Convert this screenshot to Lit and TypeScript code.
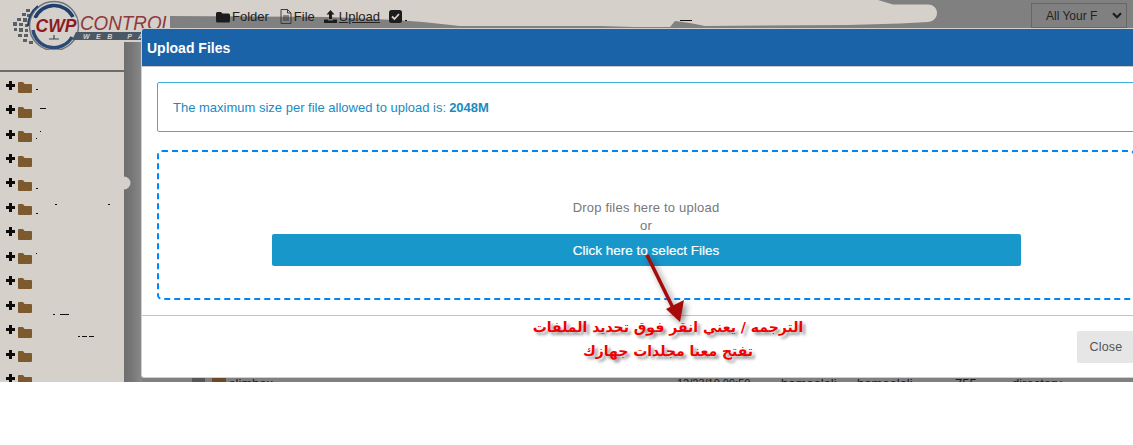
import { LitElement, html, css, svg } from "lit";
import { customElement } from "lit/decorators.js";

const ROWS = 13;

const background = svg`
<svg class="bg" width="1133" height="382" viewBox="0 0 1133 382">
  <defs>
    <linearGradient id="side" x1="0" x2="1" y1="0" y2="0">
      <stop offset="0" stop-color="#6e6e6e"/>
      <stop offset="0.4" stop-color="#767676"/>
      <stop offset="1" stop-color="#8a8a8a"/>
    </linearGradient>
  </defs>
  <rect width="1133" height="382" fill="#808080"/>
  <rect x="124" y="40" width="18" height="342" fill="url(#side)"/>
  <path fill="#d5d0ca" d="M0 0H878L893 4.500H928C940 5 940 21 928 22L900 23.500L848 25L705 26L690 23L675 21L670 27H634L600 26L460 26L423 22L395 20L330 17L170 16V42H124V382H0Z"/>
  <circle cx="124" cy="183" r="6.500" fill="#d5d0ca"/>
  <rect x="192" y="378" width="13" height="4" fill="#565656"/>
  <rect x="212" y="378" width="14" height="4" fill="#6b4b25"/>
  <rect x="0" y="70" width="124" height="2" fill="#6e6b68"/>
  <g fill="#111">
    <rect x="36" y="89" width="2" height="1"/><rect x="40" y="108" width="6" height="1"/>
    <rect x="40" y="131" width="1" height="1"/><rect x="36" y="138" width="1" height="1"/>
    <rect x="36" y="188" width="2" height="1"/><rect x="55" y="204" width="2" height="1"/>
    <rect x="108" y="204" width="2" height="1"/><rect x="36" y="213" width="2" height="1"/>
    <rect x="36" y="253" width="1" height="1"/><rect x="53" y="314" width="2" height="1"/>
    <rect x="60" y="314" width="9" height="1"/><rect x="78" y="336" width="2" height="1"/>
    <rect x="82" y="336" width="5" height="1"/><rect x="89" y="336" width="5" height="1"/>
    <rect x="405" y="20" width="2" height="1"/><rect x="680" y="20" width="12" height="1"/>
  </g>
</svg>`;

const logo = svg`
<svg class="logo" width="172" height="50" viewBox="0 0 172 50">
  <g fill="#5b5f66">
    <rect x="26" y="9" width="4" height="3"/><rect x="22" y="13" width="4" height="3"/><rect x="27" y="14" width="3" height="3"/>
    <rect x="17" y="18" width="4" height="3"/><rect x="23" y="18" width="4" height="4"/>
    <rect x="13" y="22" width="4" height="4"/><rect x="19" y="23" width="4" height="3"/><rect x="25" y="24" width="3" height="3"/>
    <rect x="14" y="28" width="3" height="3"/><rect x="19" y="28" width="4" height="4"/><rect x="25" y="29" width="3" height="3"/>
    <rect x="18" y="34" width="4" height="3"/><rect x="24" y="34" width="4" height="3"/>
    <rect x="23" y="39" width="4" height="3"/><rect x="29" y="41" width="4" height="3"/>
  </g>
  <circle cx="54" cy="26" r="24.500" fill="none" stroke="#6d7480" stroke-width="1.500"/>
  <path d="M35 18A21 21 0 0 1 73 17" fill="none" stroke="#1f3f6e" stroke-width="3.500"/>
  <path d="M33 30A21 21 0 0 0 72 37" fill="none" stroke="#2a4a78" stroke-width="3.500"/>
  <path d="M28 26A26 26 0 0 1 38 6" fill="none" stroke="#1f3f6e" stroke-width="2"/>
  <rect x="36" y="18" width="41" height="16" fill="#d5d0ca"/>
  <text class="cwp" x="35.500" y="32" textLength="41" lengthAdjust="spacingAndGlyphs">CWP</text>
  <text class="ctl" x="80" y="30" textLength="92" lengthAdjust="spacingAndGlyphs">CONTROL</text>
  <path d="M76 32H142V40H72Z" fill="#4b5866"/>
  <text class="web" x="83" y="38.500">WEB PA</text>
  <path d="M49 39H59M54 35V39" stroke="#33485f" stroke-width="1.200" fill="none"/>
</svg>`;

const folderDark = svg`<svg width="14" height="12" viewBox="0 0 14 12"><path fill="#1c1c1c" d="M1.500 1H5l1.500 1.500H12.500A1.500 1.500 0 0 1 14 4V10A1.500 1.500 0 0 1 12.500 11.500H1.500A1.500 1.500 0 0 1 0 10V2.500A1.500 1.500 0 0 1 1.500 1Z"/></svg>`;
const fileIcon = svg`<svg width="12" height="15" viewBox="0 0 12 15"><path fill="none" stroke="#3a3a3a" d="M1 .5H7.500L11 4V14.500H1ZM7.500 .5V4H11"/><path stroke="#3a3a3a" d="M3 7H9M3 9H9M3 11H9"/></svg>`;
const uploadIcon = svg`<svg width="13" height="13" viewBox="0 0 13 13"><path fill="#1c1c1c" d="M6.500 0L10.500 4.500H8V9H5V4.500H2.500ZM0 9.500H4V10.500H9V9.500H13V13H0Z"/></svg>`;
const checkIcon = svg`<svg width="13" height="13" viewBox="0 0 13 13"><rect width="13" height="13" rx="2.500" fill="#1c1c1c"/><path d="M3 6.500L5.500 9L10 4" fill="none" stroke="#d5d0ca" stroke-width="1.800"/></svg>`;
const plus = svg`<svg width="9" height="9" viewBox="0 0 9 9"><path fill="#0c0c0c" d="M3 0H6V3H9V6H6V9H3V6H0V3H3Z"/></svg>`;
const folder = svg`<svg class="fld" width="14" height="11" viewBox="0 0 14 11"><path fill="#7d5a2e" d="M1 0H5L6.500 2H13A1 1 0 0 1 14 3V10A1 1 0 0 1 13 11H1A1 1 0 0 1 0 10V1A1 1 0 0 1 1 0Z"/></svg>`;
const chevron = svg`<svg width="10" height="7" viewBox="0 0 10 7"><path d="M1 1.200L5 5.200L9 1.200" fill="none" stroke="#1c1c1c" stroke-width="2.200"/></svg>`;
const arrow = svg`
<svg class="arrow" width="60" height="90" viewBox="0 0 60 90">
  <path d="M6 3L33 58" stroke="#a80a0a" stroke-width="3.500" fill="none"/>
  <path d="M39 70L25 57L43 48Z" fill="#a80a0a"/>
</svg>`;

@customElement("app-root")
export class AppRoot extends LitElement {
  static styles = css`
    :host { display: block; width: 1133px; height: 445px; overflow: hidden; background: #fff; font-family: "Liberation Sans", Arial, sans-serif; }
    .stage { position: relative; height: 382px; overflow: hidden; }
    .bg { position: absolute; left: 0; top: 0; }
    .top { position: relative; display: flex; height: 72px; }
    .logo { flex: none; width: 172px; height: 50px; }
    .logo text { font-family: "Liberation Sans", Arial, sans-serif; }
    .logo .cwp { font-size: 19px; font-weight: 700; font-style: italic; fill: #8e1b22; }
    .logo .ctl { font-size: 20px; font-style: italic; fill: #8c3a3c; }
    .logo .web { font-size: 7px; font-weight: 700; font-style: italic; fill: #d5d0ca; letter-spacing: 6.500px; }
    .tools { display: flex; align-items: center; height: 15px; margin: 9px 0 0 44px; font-size: 13px; color: #222; }
    .tool { display: flex; align-items: center; gap: 2px; margin-right: 9px; }
    .tool.f { margin-right: 11px; }
    .tool .u { text-decoration: underline; }
    .tool svg { flex: none; }
    .select { display: flex; align-items: center; justify-content: space-between; box-sizing: border-box; width: 96px; height: 25px; margin: 3px 6px 0 auto; padding: 0 4px 0 14px; border: 1px solid #666; font-size: 12px; color: #222; }
    .tree { position: relative; width: 124px; padding-top: 1px; }
    .row { display: flex; align-items: center; gap: 3px; height: 24.45px; padding-left: 6px; box-sizing: border-box; }
    .fld { margin-top: 5px; }
    .under { position: absolute; left: 229px; top: 376px; display: grid; grid-template-columns: 448px 104px 76px 98px 57px auto; font-size: 13px; line-height: 15px; color: #1a1a1a; white-space: nowrap; }
    .under .date { font-size: 11px; }
    .modal { position: absolute; left: 141px; top: 28px; width: 1010px; height: 350px; box-sizing: border-box; display: flex; flex-direction: column; background: #fff; border: 1px solid #cfcfcf; border-radius: 3px; }
    .head { flex: none; display: flex; align-items: center; height: 38px; box-sizing: border-box; padding-left: 5px; background: #1a63a8; border-bottom: 1px solid #c9c9c9; color: #fff; font-size: 14px; font-weight: 700; border-radius: 2px 2px 0 0; }
    .body { flex: none; display: flex; flex-direction: column; gap: 18px; padding: 15px; border-bottom: 1px solid #c4c4c4; }
    .alert { display: flex; align-items: center; box-sizing: border-box; height: 50px; padding-left: 15px; border: 1px solid #3bb0dc; border-radius: 2px; color: #1a8abf; font-size: 13px; white-space: pre; }
    .alert b { margin-left: 3px; }
    .drop { display: flex; flex-direction: column; align-items: center; box-sizing: border-box; height: 150px; padding-top: 46px; border: 2px dashed #0087f7; border-radius: 5px; color: #777; font-size: 13px; letter-spacing: 0.200px; }
    .line { height: 18px; line-height: 20px; }
    .pick { display: flex; align-items: center; justify-content: center; width: 749px; height: 32px; background: #1797ca; border-radius: 2px; color: #fff; font-size: 13.500px; letter-spacing: 0; -webkit-text-stroke: 0.200px #fff; }
    .foot { flex: 1; display: flex; justify-content: flex-end; padding: 15px 15px 0 0; }
    .close { display: flex; align-items: center; justify-content: center; width: 58px; height: 32px; background: #e6e6e6; border-radius: 2px; color: #555; font-size: 12.500px; letter-spacing: 0.200px; }
    .arrow { position: absolute; left: 641px; top: 252px; filter: drop-shadow(3px 3px 3px rgba(0,0,0,.45)); }
    .note { position: absolute; left: 501px; top: 315px; width: 334px; text-align: center; direction: rtl; font-family: "DejaVu Sans", sans-serif; font-size: 14px; font-weight: 700; line-height: 24px; color: #f00000; text-shadow: 3px 3px 3px rgba(0,0,0,.4); }
  `;

  render() {
    return html`
      <div class="stage">
        ${background}
        <div class="under">
          <span>slimbox</span>
          <span class="date">12/23/10 09:50</span>
          <span>hamoolali</span>
          <span>hamoolali</span>
          <span>755</span>
          <span>directory</span>
        </div>
        <div class="top">
          ${logo}
          <div class="tools">
            <div class="tool f">${folderDark}<span>Folder</span></div>
            <div class="tool">${fileIcon}<span>File</span></div>
            <div class="tool">${uploadIcon}<span class="u">Upload</span></div>
            <div class="tool">${checkIcon}</div>
          </div>
          <div class="select"><span>All Your F</span>${chevron}</div>
        </div>
        <div class="tree">
          ${Array.from({ length: ROWS }, () => html`<div class="row">${plus}${folder}</div>`)}
        </div>
        <div class="modal">
          <div class="head">Upload Files</div>
          <div class="body">
            <div class="alert">The maximum size per file allowed to upload is:<b>2048M</b></div>
            <div class="drop">
              <div class="line">Drop files here to upload</div>
              <div class="line">or</div>
              <div class="pick">Click here to select Files</div>
            </div>
          </div>
          <div class="foot"><div class="close">Close</div></div>
        </div>
        ${arrow}
        <div class="note">الترجمه / يعني انقر فوق تحديد الملفات<br />تفتح معنا مجلدات جهازك</div>
      </div>
    `;
  }
}
